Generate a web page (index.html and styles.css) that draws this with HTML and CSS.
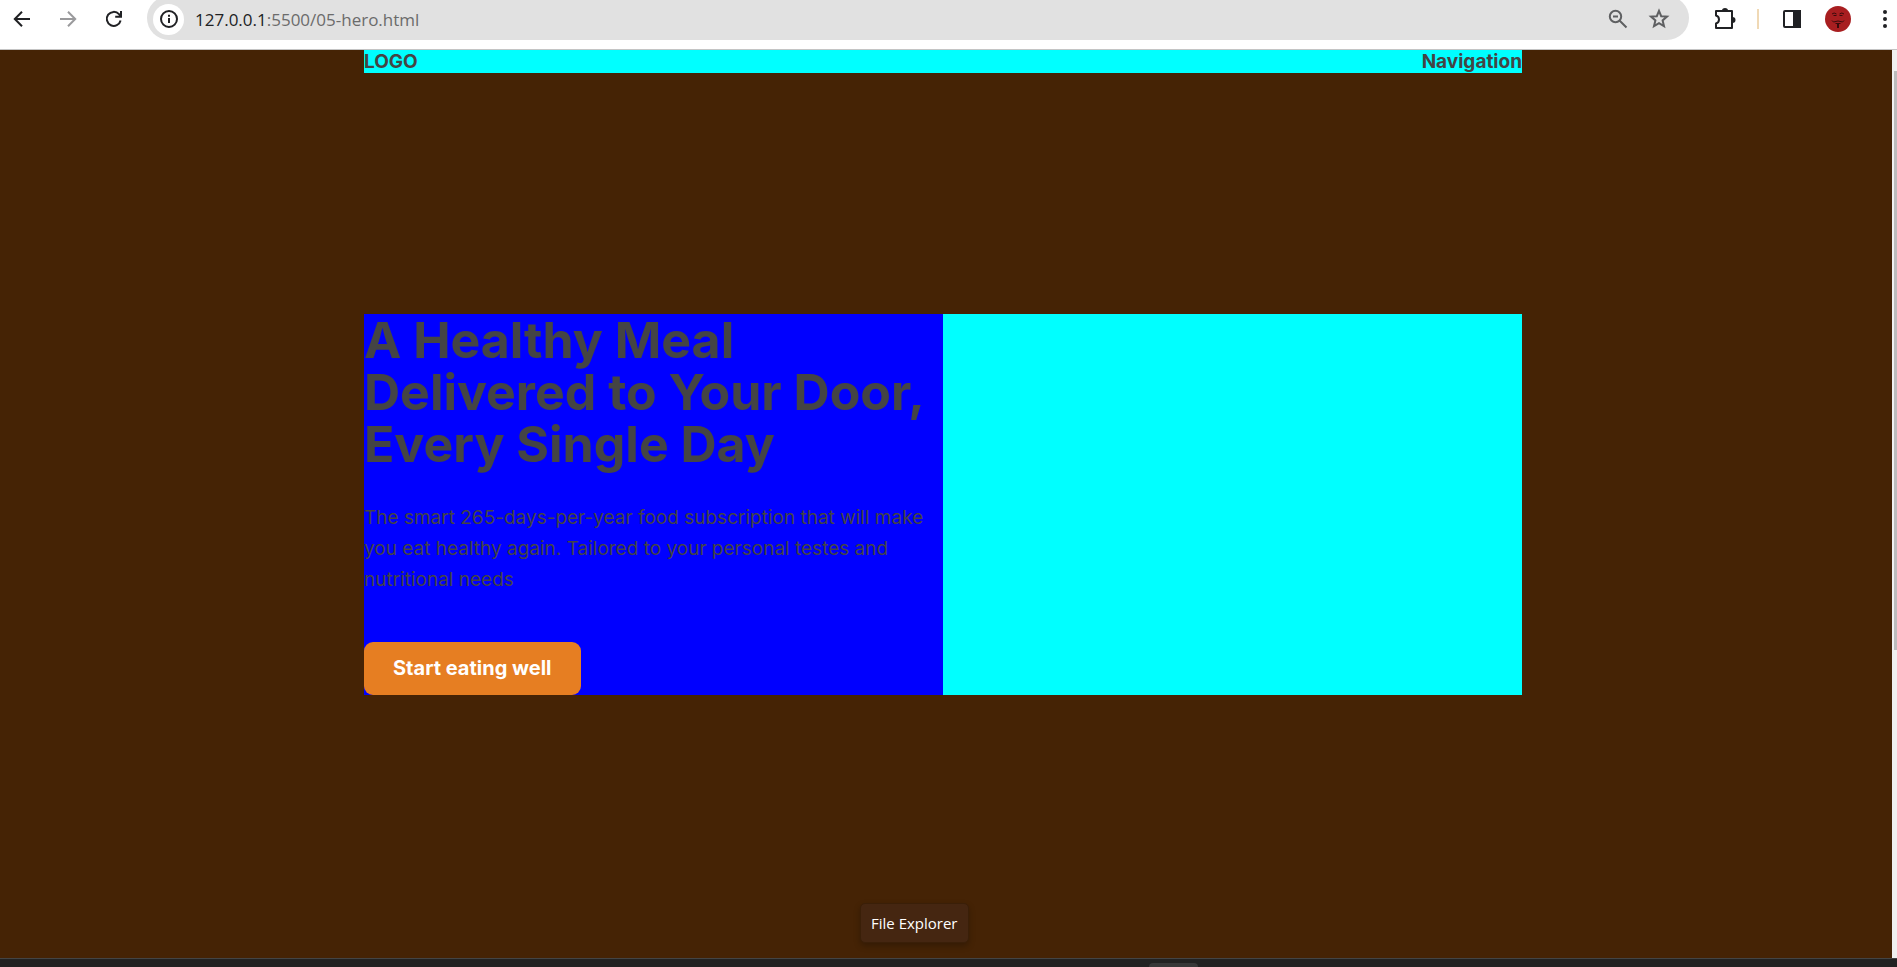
FILE: index.html
```html
<!DOCTYPE html>
<html lang="en">
<head>
<meta charset="utf-8">
<title>05-hero</title>
<link rel="stylesheet" href="styles.css">
</head>
<body>
<div class="toolbar">
  <div class="nav-buttons">
    <button class="icon-btn" aria-label="Back"><svg width="18" height="18" viewBox="0 0 18 18"><path d="M17 9H2M9 1.800L1.800 9L9 16.200" /></svg></button>
    <button class="icon-btn muted" aria-label="Forward"><svg width="18" height="18" viewBox="0 0 18 18"><path d="M1 9H16M9 1.800L16.200 9L9 16.200" /></svg></button>
    <button class="icon-btn" aria-label="Reload"><svg width="18" height="18" viewBox="0 0 18 18"><path d="M15.600 10.500A7 7 0 1 1 14 4.200L15.500 6M16 1V6.800H10.200" /></svg></button>
  </div>
  <div class="omnibox">
    <button class="site-info" aria-label="Site information"><svg width="20" height="20" viewBox="0 0 20 20"><circle cx="10" cy="10" r="8" /><path d="M10 9V14M10 5.800V7.800" /></svg></button>
    <a class="url" href="#"><span class="host">127.0.0.1</span>:5500/05-hero.html</a>
    <button class="icon-btn grey" aria-label="Zoom"><svg width="20" height="20" viewBox="0 0 20 20"><circle cx="7.500" cy="7.500" r="5.700" /><path d="M5 7.500H10M11.500 11.500L18.500 18.500" /></svg></button>
    <button class="icon-btn grey" aria-label="Bookmark"><svg width="22" height="22" viewBox="0 0 22 22"><path d="M11 2.800L13.200 8.200L19 8.600L14.600 12.400L16 18.200L11 15.100L6 18.200L7.400 12.400L3 8.600L8.800 8.200Z" /></svg></button>
  </div>
  <div class="actions">
    <button class="icon-btn" aria-label="Extensions"><svg width="24" height="24" viewBox="0 0 24 24"><path d="M3 4H19V21H3V16.500C7 15.500 7 9.500 3 8.500Z" stroke-linejoin="round"/><path d="M9 3.500A3 2.500 0 0 1 15 3.500ZM19.500 10A3 3 0 0 1 19.500 16Z" fill="currentColor" stroke="none"/></svg></button>
    <span class="divider"></span>
    <button class="icon-btn" aria-label="Side panel"><svg width="20" height="20" viewBox="0 0 20 20"><rect x="2" y="2" width="16" height="16" rx="1" /><path d="M12 2H18V18H12Z" fill="currentColor" /></svg></button>
    <button class="icon-btn" aria-label="Profile"><svg width="26" height="26" viewBox="0 0 26 26"><circle cx="13" cy="13" r="13" fill="#a81e20" stroke="none"/><path d="M7 8Q9 6 11.500 8M19 8Q17 6 14.500 8M8.500 9.500H11.500M14.500 9.500H17.500M7 14.500L8.500 16L13 15L17.500 16L19 14.500M10.500 17.500H15.500" class="mask" /><path d="M13 18V22" class="mask goatee" /></svg></button>
    <button class="icon-btn menu" aria-label="Menu"><svg width="6" height="20" viewBox="0 0 6 20"><g fill="currentColor" stroke="none"><circle cx="3" cy="3" r="2"/><circle cx="3" cy="10" r="2"/><circle cx="3" cy="17" r="2"/></g></svg></button>
  </div>
</div>
<div class="viewport">
  <div class="page">
    <header class="header container">
      <div>LOGO</div>
      <nav>Navigation</nav>
    </header>
    <section class="hero container">
      <div class="hero-text">
        <h1>A Healthy Meal Delivered to Your Door, Every Single Day</h1>
        <p>The smart 265-days-per-year food subscription that will make you eat healthy again. Tailored to your personal testes and nutritional needs</p>
        <a class="btn" href="#">Start eating well</a>
      </div>
      <div class="hero-image"></div>
    </section>
  </div>
  <div class="scrollbar"><div class="thumb"></div></div>
  <div class="tooltip" role="tooltip">File Explorer</div>
</div>
<div class="taskbar"><div class="task"></div></div>
</body>
</html>
```
FILE: styles.css
```css
* { box-sizing: border-box; margin: 0; padding: 0; }
body {
  display: flex;
  flex-direction: column;
  height: 100vh;
  overflow: hidden;
  font-family: Inter, sans-serif;
  color: #444;
}
button { background: none; border: 0; }
a { text-decoration: none; color: inherit; }
svg { display: block; fill: none; stroke: currentColor; stroke-width: 2; }

.toolbar {
  display: flex;
  justify-content: space-between;
  flex: none;
  height: 50px;
  background: #fff;
  border-bottom: 1px solid #c4c4c4;
}
.icon-btn { display: flex; align-items: center; justify-content: center; color: #202124; }
.icon-btn.muted { color: #9a9a9c; }
.icon-btn.grey { color: #5f6062; }
.nav-buttons { display: flex; gap: 28px; height: 38px; padding: 0 24px 0 13px; }
.omnibox {
  display: flex;
  align-items: center;
  flex: 1;
  gap: 20px;
  height: 44px;
  margin-top: -4px;
  padding: 2px 19px 0 6px;
  border-radius: 22px;
  background: #e1e1e1;
}
.site-info {
  display: flex;
  align-items: center;
  justify-content: center;
  width: 31px;
  height: 31px;
  border-radius: 50%;
  background: #fff;
  color: #202124;
}
.url {
  flex: 1;
  margin-left: -9px;
  font: 17px "Open Sans", sans-serif;
  color: #6b6b6b;
}
.host { color: #202124; }
.actions { display: flex; align-items: center; height: 38px; gap: 23px; padding: 0 9px 0 24px; }
.divider { width: 2px; height: 20px; margin-left: -3px; background: #f0d9b5; }
.menu { margin-left: 8px; }
.mask { stroke: #3a0b0c; stroke-width: 1; }
.goatee { stroke-width: 2; }

.viewport { display: flex; flex: 1; min-height: 0; position: relative; background: #452305; }
.page { flex: 1; padding-right: 6px; }
.container { width: 1158px; max-width: 100%; margin: 0 auto; }
.header {
  display: flex;
  justify-content: space-between;
  background: #0ff;
  font-size: 19px;
  line-height: 23px;
  font-weight: 700;
}
.hero { display: grid; grid-template-columns: 1fr 1fr; margin-top: 241px; background: #0ff; }
.hero-text { background: #00f; }
h1 { font-size: 50px; line-height: 52px; font-weight: 700; margin-bottom: 32px; }
p { font-size: 19px; line-height: 31px; margin-bottom: 47px; }
.btn {
  display: inline-block;
  padding: 15px 29px;
  border-radius: 9px;
  background: #e67e22;
  color: #fff;
  font-size: 20px;
  line-height: 23px;
  font-weight: 700;
  vertical-align: top;
}
.scrollbar { width: 5px; padding: 21px 0 0 2px; background: #f0f0f0; }
.thumb { height: 579px; background: #bcbcbc; }
.tooltip {
  position: absolute;
  left: 860px;
  bottom: 15px;
  padding: 9px 10px;
  border: 1px solid #3a1f08;
  border-radius: 5px;
  background: #452611;
  box-shadow: 0 3px 6px rgba(0, 0, 0, .25);
  color: #fff;
  font: 15px/20px "Open Sans", sans-serif;
}
.taskbar { flex: none; height: 9px; padding: 4px 0 0 1149px; background: #222; border-top: 1px solid #444; }
.task { width: 49px; height: 4px; border-radius: 4px 4px 0 0; background: #383838; }
```
